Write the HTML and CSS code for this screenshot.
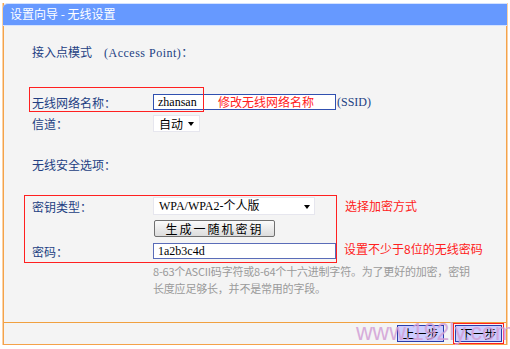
FILE: index.html
```html
<!DOCTYPE html>
<html lang="zh-CN">
<head>
    <meta charset="UTF-8">
    <title>设置向导 - 无线设置</title>
    <link rel="stylesheet" href="styles.css">
</head>
<body>
    <div class="panel">
        <div class="panel-head">设置向导 - 无线设置</div>
        <div class="panel-body">
            <div class="section-title">接入点模式　<span class="latin">(Access Point)</span>：</div>

            <div class="row row-ssid">
                <span class="label">无线网络名称：</span>
                <span class="text-box ssid-box">zhansan</span>
                <span class="suffix">(SSID)</span>
                <span class="mark mark-ssid"></span>
                <span class="note note-ssid">修改无线网络名称</span>
            </div>
            <div class="row row-channel">
                <span class="label">信道：</span>
                <span class="drop drop-channel">自动<i class="caret"></i></span>
            </div>

            <div class="section-title section-sec">无线安全选项：</div>

            <div class="secure">
                <div class="row row-key">
                    <span class="label">密钥类型：</span>
                    <span class="drop drop-key">WPA/WPA2-个人版<i class="caret"></i></span>
                </div>
                <div class="row row-gen">
                    <span class="label"></span>
                    <span class="gen-btn">生成一随机密钥</span>
                </div>
                <div class="row row-pw">
                    <span class="label">密码：</span>
                    <span class="text-box pw-box">1a2b3c4d</span>
                </div>
                <span class="mark mark-secure"></span>
                <span class="note note-key">选择加密方式</span>
                <span class="note note-pw">设置不少于8位的无线密码</span>
            </div>

            <p class="hint">8-63个ASCII码字符或8-64个十六进制字符。为了更好的加密，密钥<br>长度应足够长，并不是常用的字段。</p>
        </div>
        <div class="panel-foot">
            <span class="nav-btn">上一步</span>
            <span class="nav-btn nav-next">下一步</span>
            <span class="watermark">www.192ly.com</span>
        </div>
    </div>
</body>
</html>
```

FILE: styles.css
```css
body {
    margin: 0;
    background-color: #ffffff;
    font-family: "Noto Sans CJK SC", sans-serif;
    font-size: 12px;
}

.panel {
    margin: 3px 0 0 3px;
    width: 504px;
    height: 342px;
    box-sizing: border-box;
    background-color: #f4f4f4;
    border: 1px solid #f4a24a;
    border-top: none;
    box-shadow: -1px 0 0 #fbd2a4, 1px 0 0 #fbd2a4, 0 1px 0 #fbd2a4;
    display: flex;
    flex-direction: column;
}

.panel-head {
    margin: 0 -1px;
    height: 21px;
    line-height: 20px;
    padding-left: 7px;
    background-color: #6699ff;
    color: #ffffff;
    border-top: 1px solid #d4e2ff;
    border-bottom: 1px solid #d4e2ff;
    border-radius: 5px 0 0 0;
    font-size: 12px;
}

.panel-body {
    height: 296px;
    box-sizing: border-box;
    padding: 19px 0 0 28px;
    color: #233f83;
}

.section-title {
    height: 14px;
    line-height: 14px;
}

.latin {
    font-family: "Liberation Serif", serif;
    letter-spacing: 0.5px;
}

.section-sec {
    margin-top: 26px;
}

.row {
    position: relative;
    display: flex;
    align-items: center;
}

.label {
    width: 121px;
    flex: none;
}

.row-ssid {
    margin-top: 35px;
    height: 16px;
}

.row-channel {
    margin-top: 5px;
    height: 17px;
}

.text-box {
    box-sizing: border-box;
    height: 16px;
    line-height: 14px;
    padding-left: 4px;
    background-color: #ffffff;
    border: 1px solid #3050b0;
    color: #000000;
    font-family: "Liberation Serif", serif;
    font-size: 12px;
}

.ssid-box {
    width: 183px;
}

.pw-box {
    width: 183px;
    border-color: #5a6cb8;
}

.suffix {
    padding-left: 1px;
    font-family: "Liberation Serif", serif;
}

.drop {
    position: relative;
    box-sizing: border-box;
    height: 18px;
    line-height: 16px;
    padding-left: 5px;
    background-color: #ffffff;
    border: 1px solid #e6e6ee;
    color: #000000;
}

.drop-channel {
    width: 47px;
    height: 17px;
}

.drop-key {
    width: 162px;
    font-family: "Liberation Serif", "Noto Sans CJK SC", serif;
}

.caret {
    position: absolute;
    right: 5px;
    top: 6px;
    border-left: 3px solid transparent;
    border-right: 3px solid transparent;
    border-top: 4px solid #000000;
}

.drop-key .caret {
    right: 4px;
    top: 7px;
}

.mark {
    position: absolute;
    border: 1px solid #ff2020;
    pointer-events: none;
}

.mark-ssid {
    left: -3px;
    top: -7px;
    width: 173px;
    height: 23px;
}

.note {
    position: absolute;
    color: #ff2020;
    white-space: nowrap;
}

.note-ssid {
    left: 186px;
    top: 0;
    line-height: 16px;
}

.secure {
    position: relative;
    margin-top: 25px;
}

.row-key {
    height: 18px;
}

.row-gen {
    margin-top: 5px;
    height: 17px;
}

.row-pw {
    margin-top: 6px;
    height: 16px;
}

.gen-btn {
    margin-left: 1px;
    box-sizing: border-box;
    width: 121px;
    height: 17px;
    line-height: 15px;
    text-align: center;
    letter-spacing: 2px;
    color: #000000;
    border: 1px solid #707070;
    border-radius: 2px;
    background: linear-gradient(#fbfbfb, #dcdcdc);
}

.mark-secure {
    left: -8px;
    top: -2px;
    width: 311px;
    height: 66px;
}

.note-key {
    left: 313px;
    top: 0;
    line-height: 18px;
}

.note-pw {
    left: 312px;
    top: 44px;
    line-height: 16px;
}

.hint {
    margin: 4px 0 0 121px;
    font-size: 11px;
    line-height: 17px;
    white-space: nowrap;
    letter-spacing: -0.2px;
    color: #9a9a9a;
}

.panel-foot {
    position: relative;
    flex: 1;
    border-top: 1px solid #f0a040;
    display: flex;
    justify-content: flex-end;
    align-items: center;
    gap: 11px;
    padding-right: 4px;
}

.nav-btn {
    box-sizing: border-box;
    width: 47px;
    height: 17px;
    line-height: 15px;
    text-align: center;
    color: #000000;
    background-color: #ccccff;
    border: 1px solid #2a3caa;
}

.nav-next {
    outline: 1px solid #ff2020;
    outline-offset: 1px;
}

.watermark {
    position: absolute;
    left: 352px;
    top: -4px;
    color: #d2a0d6;
    opacity: 0.85;
    font-family: "Liberation Sans", sans-serif;
    font-size: 23px;
    line-height: 26px;
    pointer-events: none;
}
```
